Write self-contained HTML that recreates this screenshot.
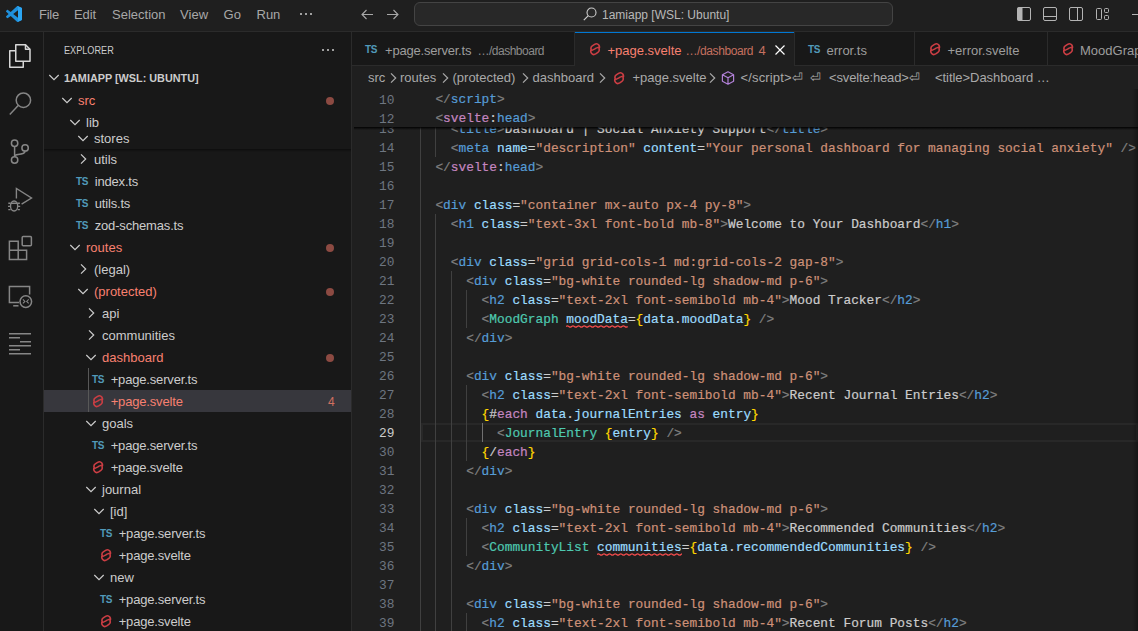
<!DOCTYPE html>
<html><head><meta charset="utf-8"><style>
html,body{margin:0;padding:0;}
body{width:1138px;height:631px;overflow:hidden;position:relative;background:#181818;}
.r{position:absolute;}
.t{position:absolute;white-space:pre;}
.c span{-webkit-text-stroke:0.2px;}
</style></head><body>
<div class="r" style="left:0px;top:0px;width:1138px;height:31px;background:#1f1f1f;"></div>
<div class="r" style="left:0px;top:31px;width:1138px;height:1px;background:#2b2b2b;"></div>
<div class="r" style="left:0px;top:32px;width:43px;height:599px;background:#181818;"></div>
<div class="r" style="left:43px;top:32px;width:1px;height:599px;background:#2b2b2b;"></div>
<div class="r" style="left:44px;top:32px;width:307px;height:599px;background:#181818;"></div>
<div class="r" style="left:351px;top:32px;width:1px;height:599px;background:#2b2b2b;"></div>
<div class="r" style="left:352px;top:32px;width:786px;height:599px;background:#1f1f1f;"></div>
<svg class="r" style="left:6px;top:6px" width="16" height="16" viewBox="0 0 100 100"><path d="M96.46 10.8 L75.86 0.87 C73.48 -0.28 70.64 0.2 68.77 2.07 L29.34 38.04 L12.16 25.01 C10.56 23.79 8.32 23.89 6.84 25.24 L1.33 30.25 C-0.49 31.9 -0.49 34.76 1.33 36.41 L16.22 50 L1.33 63.59 C-0.49 65.24 -0.49 68.1 1.33 69.75 L6.84 74.76 C8.32 76.11 10.56 76.21 12.16 74.99 L29.34 61.96 L68.77 97.93 C70.64 99.8 73.48 100.28 75.86 99.13 L96.46 89.2 C98.62 88.16 100 85.97 100 83.57 V16.43 C100 14.03 98.62 11.84 96.46 10.8 Z M75.02 72.7 L45.11 50 L75.02 27.3 Z" fill="#1f90dc" fill-rule="evenodd"/><path d="M68.77 2.07 C70.64 0.2 73.48 -0.28 75.86 0.87 L96.46 10.8 C98.62 11.84 100 14.03 100 16.43 V83.57 C100 85.97 98.62 88.16 96.46 89.2 L75.86 99.13 C73.48 100.28 70.64 99.8 68.77 97.93 C71 99 75 98 75.02 95 V5 C75 2 71 1 68.77 2.07 Z" fill="#2ba6f3"/></svg>
<div class="t" style="left:39px;top:4.99px;font-size:13px;line-height:20px;color:#a8a8a8;font-weight:400;font-family:'Liberation Sans', sans-serif;letter-spacing:-0.25px;">File</div>
<div class="t" style="left:74px;top:4.99px;font-size:13px;line-height:20px;color:#a8a8a8;font-weight:400;font-family:'Liberation Sans', sans-serif;letter-spacing:-0.1px;">Edit</div>
<div class="t" style="left:112px;top:4.99px;font-size:13px;line-height:20px;color:#a8a8a8;font-weight:400;font-family:'Liberation Sans', sans-serif;letter-spacing:0px;">Selection</div>
<div class="t" style="left:180px;top:4.99px;font-size:13px;line-height:20px;color:#a8a8a8;font-weight:400;font-family:'Liberation Sans', sans-serif;letter-spacing:0.1px;">View</div>
<div class="t" style="left:223.5px;top:4.99px;font-size:13px;line-height:20px;color:#a8a8a8;font-weight:400;font-family:'Liberation Sans', sans-serif;letter-spacing:0.1px;">Go</div>
<div class="t" style="left:256.5px;top:4.99px;font-size:13px;line-height:20px;color:#a8a8a8;font-weight:400;font-family:'Liberation Sans', sans-serif;letter-spacing:0px;">Run</div>
<div class="r" style="left:300px;top:13px;width:2px;height:2px;background:#cccccc;border-radius:1px;"></div>
<div class="r" style="left:305px;top:13px;width:2px;height:2px;background:#cccccc;border-radius:1px;"></div>
<div class="r" style="left:310px;top:13px;width:2px;height:2px;background:#cccccc;border-radius:1px;"></div>
<svg class="r" style="left:359px;top:6px;" width="16" height="16" viewBox="0 0 16 16"><path d="M14 8.5 H3 M7.5 4 L3 8.5 L7.5 13" stroke="#a8a8a8" stroke-width="1.1" fill="none"/></svg>
<svg class="r" style="left:385px;top:6px;" width="16" height="16" viewBox="0 0 16 16"><path d="M2 8.5 H13 M8.5 4 L13 8.5 L8.5 13" stroke="#a8a8a8" stroke-width="1.1" fill="none"/></svg>
<div class="r" style="left:414px;top:2px;width:479px;height:24px;background:#282828;box-sizing:border-box;border:1px solid #444444;border-radius:6px;"></div>
<svg class="r" style="left:582px;top:6px;" width="16" height="16" viewBox="0 0 16 16"><circle cx="9.5" cy="6.5" r="4.5" stroke="#cccccc" stroke-width="1.1" fill="none"/><path d="M6.3 9.7 L1.8 14.2" stroke="#cccccc" stroke-width="1.2"/></svg>
<div class="t" style="left:602px;top:5.34px;font-size:12px;line-height:20px;color:#b8b8b8;font-weight:400;font-family:'Liberation Sans', sans-serif;">1amiapp [WSL: Ubuntu]</div>
<svg class="r" style="left:1016px;top:6px;" width="16" height="16" viewBox="0 0 16 16"><rect x="1.5" y="1.5" width="13" height="13" rx="1.5" stroke="#b4b4b4" fill="none"/><rect x="1.5" y="1.5" width="5" height="13" fill="#b4b4b4"/></svg>
<svg class="r" style="left:1042px;top:6px;" width="16" height="16" viewBox="0 0 16 16"><rect x="1.5" y="1.5" width="13" height="13" rx="1.5" stroke="#b4b4b4" fill="none"/><path d="M1.5 10.5 H14.5" stroke="#b4b4b4"/></svg>
<svg class="r" style="left:1068px;top:6px;" width="16" height="16" viewBox="0 0 16 16"><rect x="1.5" y="1.5" width="13" height="13" rx="1.5" stroke="#b4b4b4" fill="none"/><path d="M9.5 1.5 V14.5" stroke="#b4b4b4"/></svg>
<svg class="r" style="left:1094px;top:6px;" width="16" height="16" viewBox="0 0 16 16"><rect x="2.5" y="2.5" width="5" height="11" rx="1" stroke="#b4b4b4" fill="none"/><rect x="10.5" y="2.5" width="4" height="4" rx="1" stroke="#b4b4b4" fill="none"/><rect x="10.5" y="9.5" width="4" height="4" rx="1" stroke="#b4b4b4" fill="none"/></svg>
<div class="r" style="left:1132px;top:14px;width:6px;height:1px;background:#b4b4b4;"></div>
<svg class="r" style="left:0px;top:32px;" width="43" height="48" viewBox="0 0 43 48"><g fill="none" stroke="#d7d7d7" stroke-width="1.5" stroke-linejoin="round">
<path d="M15.75 12.75 H25.5 L30 17.25 V29.25 H15.75 Z"/><path d="M25.5 12.75 V17.25 H30"/>
<path d="M15.75 18.75 H9.75 V35.25 H23.25 V29.25"/></g></svg>
<svg class="r" style="left:0px;top:80px;" width="43" height="48" viewBox="0 0 43 48"><g fill="none" stroke="#868686" stroke-width="1.5"><circle cx="23.4" cy="20.2" r="7.2"/><path d="M18.2 25.6 L9.8 34.5"/></g></svg>
<svg class="r" style="left:0px;top:128px;" width="43" height="48" viewBox="0 0 43 48"><g fill="none" stroke="#868686" stroke-width="1.5"><circle cx="14.6" cy="15.3" r="3.2"/><circle cx="25.1" cy="19.9" r="3.2"/><circle cx="14.6" cy="32" r="3.2"/><path d="M14.6 18.5 V28.8 M25.1 23.1 C25.1 26 22 26.3 18 26.5 C15.5 26.7 14.6 27.5 14.6 28.8"/></g></svg>
<svg class="r" style="left:0px;top:176px;" width="43" height="48" viewBox="0 0 43 48"><g fill="none" stroke="#868686" stroke-width="1.4"><path d="M16.4 22.5 V12.5 L31.5 22 L21.6 28.2"/><ellipse cx="14.1" cy="30" rx="3.6" ry="5"/><path d="M10.8 27.3 H17.4 M8.3 27.2 H10.3 M8 30.4 H10.3 M8.3 33.6 H10.6 M17.9 27.2 H19.9 M17.9 30.4 H20.2 M17.6 33.6 H19.9"/></g></svg>
<svg class="r" style="left:0px;top:224px;" width="43" height="48" viewBox="0 0 43 48"><g fill="none" stroke="#868686" stroke-width="1.5"><path d="M9.4 17.2 H18.2 V35.4 H9.4 Z M9.4 26.2 H26.6 V35.4 H18.2"/><rect x="22.2" y="12.6" width="9.2" height="9.2" rx="1"/></g></svg>
<svg class="r" style="left:0px;top:272px;" width="43" height="48" viewBox="0 0 43 48"><g fill="none" stroke="#868686" stroke-width="1.5"><path d="M19 30.6 H9.4 V14.6 H29.6 V22.5"/><path d="M13.2 33.8 H18.5"/><circle cx="25.8" cy="29.6" r="5.8"/><path d="M22.9 27.4 L24.9 29.4 L22.9 31.4 M28.7 27.4 L26.7 29.4 L28.7 31.4" stroke-width="1.1"/></g></svg>
<svg class="r" style="left:0px;top:320px;" width="43" height="48" viewBox="0 0 43 48"><g stroke="#868686" stroke-width="1.5"><path d="M9 13.75 H31 M9 17.75 H20 M20 21.75 H31 M9 25.75 H31 M9 29.75 H20 M9 33.75 H31"/></g></svg>
<div class="t" style="left:64px;top:39.69px;font-size:11px;line-height:20px;color:#cccccc;font-weight:400;font-family:'Liberation Sans', sans-serif;transform-origin:0 0;transform:scaleX(0.83);">EXPLORER</div>
<div class="r" style="left:322px;top:49px;width:2px;height:2px;background:#cccccc;border-radius:1px;"></div>
<div class="r" style="left:327px;top:49px;width:2px;height:2px;background:#cccccc;border-radius:1px;"></div>
<div class="r" style="left:332px;top:49px;width:2px;height:2px;background:#cccccc;border-radius:1px;"></div>
<svg class="r" style="left:75px;top:151px;" width="16" height="16" viewBox="0 0 16 16"><path d="M6 3.3 L10.7 8 L6 12.7" stroke="#cccccc" stroke-width="1.2" fill="none"/></svg>
<div class="t" style="left:94px;top:149.99px;font-size:13px;line-height:20px;color:#cccccc;font-weight:400;font-family:'Liberation Sans', sans-serif;">utils</div>
<div class="t" style="left:76px;top:177px;font-family:'Liberation Sans', sans-serif;font-weight:700;font-size:10px;line-height:10px;color:#519aba;letter-spacing:-0.3px;">TS</div>
<div class="t" style="left:94.7px;top:171.99px;font-size:13px;line-height:20px;color:#cccccc;font-weight:400;font-family:'Liberation Sans', sans-serif;letter-spacing:-0.17px;">index.ts</div>
<div class="t" style="left:76px;top:199px;font-family:'Liberation Sans', sans-serif;font-weight:700;font-size:10px;line-height:10px;color:#519aba;letter-spacing:-0.3px;">TS</div>
<div class="t" style="left:94.7px;top:193.99px;font-size:13px;line-height:20px;color:#cccccc;font-weight:400;font-family:'Liberation Sans', sans-serif;letter-spacing:-0.17px;">utils.ts</div>
<div class="t" style="left:76px;top:221px;font-family:'Liberation Sans', sans-serif;font-weight:700;font-size:10px;line-height:10px;color:#519aba;letter-spacing:-0.3px;">TS</div>
<div class="t" style="left:94.7px;top:215.99px;font-size:13px;line-height:20px;color:#cccccc;font-weight:400;font-family:'Liberation Sans', sans-serif;letter-spacing:-0.17px;">zod-schemas.ts</div>
<svg class="r" style="left:67px;top:239px;" width="16" height="16" viewBox="0 0 16 16"><path d="M3.3 6 L8 10.7 L12.7 6" stroke="#cccccc" stroke-width="1.2" fill="none"/></svg>
<div class="t" style="left:86px;top:237.99px;font-size:13px;line-height:20px;color:#f88070;font-weight:400;font-family:'Liberation Sans', sans-serif;">routes</div>
<div class="r" style="left:325.5px;top:243.5px;width:8px;height:8px;border-radius:50%;background:#8c4a42"></div>
<svg class="r" style="left:75px;top:261px;" width="16" height="16" viewBox="0 0 16 16"><path d="M6 3.3 L10.7 8 L6 12.7" stroke="#cccccc" stroke-width="1.2" fill="none"/></svg>
<div class="t" style="left:94px;top:259.99px;font-size:13px;line-height:20px;color:#cccccc;font-weight:400;font-family:'Liberation Sans', sans-serif;">(legal)</div>
<svg class="r" style="left:75px;top:283px;" width="16" height="16" viewBox="0 0 16 16"><path d="M3.3 6 L8 10.7 L12.7 6" stroke="#cccccc" stroke-width="1.2" fill="none"/></svg>
<div class="t" style="left:94px;top:281.99px;font-size:13px;line-height:20px;color:#f88070;font-weight:400;font-family:'Liberation Sans', sans-serif;">(protected)</div>
<div class="r" style="left:325.5px;top:287.5px;width:8px;height:8px;border-radius:50%;background:#8c4a42"></div>
<svg class="r" style="left:83px;top:305px;" width="16" height="16" viewBox="0 0 16 16"><path d="M6 3.3 L10.7 8 L6 12.7" stroke="#cccccc" stroke-width="1.2" fill="none"/></svg>
<div class="t" style="left:102px;top:303.99px;font-size:13px;line-height:20px;color:#cccccc;font-weight:400;font-family:'Liberation Sans', sans-serif;">api</div>
<svg class="r" style="left:83px;top:327px;" width="16" height="16" viewBox="0 0 16 16"><path d="M6 3.3 L10.7 8 L6 12.7" stroke="#cccccc" stroke-width="1.2" fill="none"/></svg>
<div class="t" style="left:102px;top:325.99px;font-size:13px;line-height:20px;color:#cccccc;font-weight:400;font-family:'Liberation Sans', sans-serif;">communities</div>
<svg class="r" style="left:83px;top:349px;" width="16" height="16" viewBox="0 0 16 16"><path d="M3.3 6 L8 10.7 L12.7 6" stroke="#cccccc" stroke-width="1.2" fill="none"/></svg>
<div class="t" style="left:102px;top:347.99px;font-size:13px;line-height:20px;color:#f88070;font-weight:400;font-family:'Liberation Sans', sans-serif;">dashboard</div>
<div class="r" style="left:325.5px;top:353.5px;width:8px;height:8px;border-radius:50%;background:#8c4a42"></div>
<div class="t" style="left:92px;top:375px;font-family:'Liberation Sans', sans-serif;font-weight:700;font-size:10px;line-height:10px;color:#519aba;letter-spacing:-0.3px;">TS</div>
<div class="t" style="left:110.7px;top:369.99px;font-size:13px;line-height:20px;color:#cccccc;font-weight:400;font-family:'Liberation Sans', sans-serif;letter-spacing:-0.17px;">+page.server.ts</div>
<div class="r" style="left:44px;top:390px;width:307px;height:22px;background:#37373d;"></div>
<svg class="r" style="left:92px;top:394px" width="12" height="14" viewBox="0 0 12 14"><g transform="translate(0.9 0.9)" fill="none" stroke="#cc3e44" stroke-linejoin="round" stroke-linecap="round"><path stroke-width="1.6" d="M8.9 2.2 C7.9 0.9 6.1 0.6 4.7 1.5 L2.4 3 C1.2 3.8 0.8 5.4 1.3 6.7 C0.7 7.8 0.8 9.3 1.6 10.3 C2.6 11.6 4.4 11.9 5.8 11 L8 9.5 C9.2 8.7 9.6 7.1 9.1 5.8 C9.7 4.7 9.7 3.2 8.9 2.2 Z"/><path stroke-width="1.35" d="M1.8 7.6 C2.8 7.2 3.6 6.9 4.6 6.3 C5.2 5.9 5.5 5.6 6.2 5.3 C7 5 7.8 4.7 8.8 4.2"/></g></svg>
<div class="t" style="left:110.7px;top:391.99px;font-size:13px;line-height:20px;color:#f88070;font-weight:400;font-family:'Liberation Sans', sans-serif;letter-spacing:-0.17px;">+page.svelte</div>
<div class="t" style="left:328px;top:392.34px;font-size:12px;line-height:20px;color:#d07060;font-weight:400;font-family:'Liberation Sans', sans-serif;">4</div>
<svg class="r" style="left:83px;top:415px;" width="16" height="16" viewBox="0 0 16 16"><path d="M3.3 6 L8 10.7 L12.7 6" stroke="#cccccc" stroke-width="1.2" fill="none"/></svg>
<div class="t" style="left:102px;top:413.99px;font-size:13px;line-height:20px;color:#cccccc;font-weight:400;font-family:'Liberation Sans', sans-serif;">goals</div>
<div class="t" style="left:92px;top:441px;font-family:'Liberation Sans', sans-serif;font-weight:700;font-size:10px;line-height:10px;color:#519aba;letter-spacing:-0.3px;">TS</div>
<div class="t" style="left:110.7px;top:435.99px;font-size:13px;line-height:20px;color:#cccccc;font-weight:400;font-family:'Liberation Sans', sans-serif;letter-spacing:-0.17px;">+page.server.ts</div>
<svg class="r" style="left:92px;top:460px" width="12" height="14" viewBox="0 0 12 14"><g transform="translate(0.9 0.9)" fill="none" stroke="#cc3e44" stroke-linejoin="round" stroke-linecap="round"><path stroke-width="1.6" d="M8.9 2.2 C7.9 0.9 6.1 0.6 4.7 1.5 L2.4 3 C1.2 3.8 0.8 5.4 1.3 6.7 C0.7 7.8 0.8 9.3 1.6 10.3 C2.6 11.6 4.4 11.9 5.8 11 L8 9.5 C9.2 8.7 9.6 7.1 9.1 5.8 C9.7 4.7 9.7 3.2 8.9 2.2 Z"/><path stroke-width="1.35" d="M1.8 7.6 C2.8 7.2 3.6 6.9 4.6 6.3 C5.2 5.9 5.5 5.6 6.2 5.3 C7 5 7.8 4.7 8.8 4.2"/></g></svg>
<div class="t" style="left:110.7px;top:457.99px;font-size:13px;line-height:20px;color:#cccccc;font-weight:400;font-family:'Liberation Sans', sans-serif;letter-spacing:-0.17px;">+page.svelte</div>
<svg class="r" style="left:83px;top:481px;" width="16" height="16" viewBox="0 0 16 16"><path d="M3.3 6 L8 10.7 L12.7 6" stroke="#cccccc" stroke-width="1.2" fill="none"/></svg>
<div class="t" style="left:102px;top:479.99px;font-size:13px;line-height:20px;color:#cccccc;font-weight:400;font-family:'Liberation Sans', sans-serif;">journal</div>
<svg class="r" style="left:91px;top:503px;" width="16" height="16" viewBox="0 0 16 16"><path d="M3.3 6 L8 10.7 L12.7 6" stroke="#cccccc" stroke-width="1.2" fill="none"/></svg>
<div class="t" style="left:110px;top:501.99px;font-size:13px;line-height:20px;color:#cccccc;font-weight:400;font-family:'Liberation Sans', sans-serif;">[id]</div>
<div class="t" style="left:100px;top:529px;font-family:'Liberation Sans', sans-serif;font-weight:700;font-size:10px;line-height:10px;color:#519aba;letter-spacing:-0.3px;">TS</div>
<div class="t" style="left:118.7px;top:523.99px;font-size:13px;line-height:20px;color:#cccccc;font-weight:400;font-family:'Liberation Sans', sans-serif;letter-spacing:-0.17px;">+page.server.ts</div>
<svg class="r" style="left:100px;top:548px" width="12" height="14" viewBox="0 0 12 14"><g transform="translate(0.9 0.9)" fill="none" stroke="#cc3e44" stroke-linejoin="round" stroke-linecap="round"><path stroke-width="1.6" d="M8.9 2.2 C7.9 0.9 6.1 0.6 4.7 1.5 L2.4 3 C1.2 3.8 0.8 5.4 1.3 6.7 C0.7 7.8 0.8 9.3 1.6 10.3 C2.6 11.6 4.4 11.9 5.8 11 L8 9.5 C9.2 8.7 9.6 7.1 9.1 5.8 C9.7 4.7 9.7 3.2 8.9 2.2 Z"/><path stroke-width="1.35" d="M1.8 7.6 C2.8 7.2 3.6 6.9 4.6 6.3 C5.2 5.9 5.5 5.6 6.2 5.3 C7 5 7.8 4.7 8.8 4.2"/></g></svg>
<div class="t" style="left:118.7px;top:545.99px;font-size:13px;line-height:20px;color:#cccccc;font-weight:400;font-family:'Liberation Sans', sans-serif;letter-spacing:-0.17px;">+page.svelte</div>
<svg class="r" style="left:91px;top:569px;" width="16" height="16" viewBox="0 0 16 16"><path d="M3.3 6 L8 10.7 L12.7 6" stroke="#cccccc" stroke-width="1.2" fill="none"/></svg>
<div class="t" style="left:110px;top:567.99px;font-size:13px;line-height:20px;color:#cccccc;font-weight:400;font-family:'Liberation Sans', sans-serif;">new</div>
<div class="t" style="left:100px;top:595px;font-family:'Liberation Sans', sans-serif;font-weight:700;font-size:10px;line-height:10px;color:#519aba;letter-spacing:-0.3px;">TS</div>
<div class="t" style="left:118.7px;top:589.99px;font-size:13px;line-height:20px;color:#cccccc;font-weight:400;font-family:'Liberation Sans', sans-serif;letter-spacing:-0.17px;">+page.server.ts</div>
<svg class="r" style="left:100px;top:614px" width="12" height="14" viewBox="0 0 12 14"><g transform="translate(0.9 0.9)" fill="none" stroke="#cc3e44" stroke-linejoin="round" stroke-linecap="round"><path stroke-width="1.6" d="M8.9 2.2 C7.9 0.9 6.1 0.6 4.7 1.5 L2.4 3 C1.2 3.8 0.8 5.4 1.3 6.7 C0.7 7.8 0.8 9.3 1.6 10.3 C2.6 11.6 4.4 11.9 5.8 11 L8 9.5 C9.2 8.7 9.6 7.1 9.1 5.8 C9.7 4.7 9.7 3.2 8.9 2.2 Z"/><path stroke-width="1.35" d="M1.8 7.6 C2.8 7.2 3.6 6.9 4.6 6.3 C5.2 5.9 5.5 5.6 6.2 5.3 C7 5 7.8 4.7 8.8 4.2"/></g></svg>
<div class="t" style="left:118.7px;top:611.99px;font-size:13px;line-height:20px;color:#cccccc;font-weight:400;font-family:'Liberation Sans', sans-serif;letter-spacing:-0.17px;">+page.svelte</div>
<div class="r" style="left:88px;top:368px;width:1px;height:44px;background:#585858;"></div>
<div class="r" style="left:44px;top:89px;width:307px;height:60px;background:#181818;"></div>
<div class="r" style="left:44px;top:88px;width:307px;height:61px;overflow:hidden;">
</div>
<svg class="r" style="left:75px;top:130px;" width="16" height="16" viewBox="0 0 16 16"><path d="M3.3 6 L8 10.7 L12.7 6" stroke="#cccccc" stroke-width="1.2" fill="none"/></svg>
<div class="t" style="left:94px;top:128.99px;font-size:13px;line-height:20px;color:#cccccc;font-weight:400;font-family:'Liberation Sans', sans-serif;">stores</div>
<div class="r" style="left:44px;top:111px;width:307px;height:16px;background:#181818;"></div>
<svg class="r" style="left:67px;top:114px;" width="16" height="16" viewBox="0 0 16 16"><path d="M3.3 6 L8 10.7 L12.7 6" stroke="#cccccc" stroke-width="1.2" fill="none"/></svg>
<div class="t" style="left:86px;top:112.99px;font-size:13px;line-height:20px;color:#cccccc;font-weight:400;font-family:'Liberation Sans', sans-serif;">lib</div>
<svg class="r" style="left:59px;top:92px;" width="16" height="16" viewBox="0 0 16 16"><path d="M3.3 6 L8 10.7 L12.7 6" stroke="#cccccc" stroke-width="1.2" fill="none"/></svg>
<div class="t" style="left:78px;top:90.99px;font-size:13px;line-height:20px;color:#f88070;font-weight:400;font-family:'Liberation Sans', sans-serif;">src</div>
<div class="r" style="left:325.5px;top:96.5px;width:8px;height:8px;border-radius:50%;background:#8c4a42"></div>
<div class="r" style="left:44px;top:149px;width:307px;height:3px;background:linear-gradient(rgba(0,0,0,0.45),rgba(0,0,0,0));"></div>
<svg class="r" style="left:46px;top:69px;" width="16" height="16" viewBox="0 0 16 16"><path d="M3.3 6 L8 10.7 L12.7 6" stroke="#cccccc" stroke-width="1.2" fill="none"/></svg>
<div class="t" style="left:64px;top:67.69px;font-size:11px;line-height:20px;color:#cccccc;font-weight:700;font-family:'Liberation Sans', sans-serif;transform-origin:0 0;transform:scaleX(0.985);">1AMIAPP [WSL: UBUNTU]</div>
<div class="r" style="left:352px;top:65px;width:786px;height:1px;background:#2b2b2b;"></div>
<div class="r" style="left:352px;top:32px;width:222px;height:33px;background:#181818;"></div>
<div class="r" style="left:574px;top:32px;width:1px;height:33px;background:#2b2b2b;"></div>
<div class="r" style="left:575px;top:32px;width:219px;height:34px;background:#1f1f1f;"></div>
<div class="r" style="left:575px;top:32px;width:219px;height:1px;background:#0078d4;"></div>
<div class="r" style="left:794px;top:32px;width:1px;height:33px;background:#2b2b2b;"></div>
<div class="r" style="left:795px;top:32px;width:119px;height:33px;background:#181818;"></div>
<div class="r" style="left:914px;top:32px;width:1px;height:33px;background:#2b2b2b;"></div>
<div class="r" style="left:915px;top:32px;width:132px;height:33px;background:#181818;"></div>
<div class="r" style="left:1047px;top:32px;width:1px;height:33px;background:#2b2b2b;"></div>
<div class="r" style="left:1048px;top:32px;width:152px;height:33px;background:#181818;"></div>
<div class="r" style="left:1200px;top:32px;width:1px;height:33px;background:#2b2b2b;"></div>
<div class="t" style="left:365px;top:45px;font-family:'Liberation Sans', sans-serif;font-weight:700;font-size:10px;line-height:10px;color:#519aba;letter-spacing:-0.3px;">TS</div>
<div class="t" style="left:385px;top:40.99px;font-size:13px;line-height:20px;color:#9d9d9d;font-weight:400;font-family:'Liberation Sans', sans-serif;letter-spacing:-0.2px;">+page.server.ts</div>
<div class="t" style="left:477.5px;top:41.34px;font-size:12px;line-height:20px;color:#8b8b8b;font-weight:400;font-family:'Liberation Sans', sans-serif;letter-spacing:-0.5px;">…/dashboard</div>
<svg class="r" style="left:589px;top:42px" width="12" height="14" viewBox="0 0 12 14"><g transform="translate(0.9 0.9)" fill="none" stroke="#cc3e44" stroke-linejoin="round" stroke-linecap="round"><path stroke-width="1.6" d="M8.9 2.2 C7.9 0.9 6.1 0.6 4.7 1.5 L2.4 3 C1.2 3.8 0.8 5.4 1.3 6.7 C0.7 7.8 0.8 9.3 1.6 10.3 C2.6 11.6 4.4 11.9 5.8 11 L8 9.5 C9.2 8.7 9.6 7.1 9.1 5.8 C9.7 4.7 9.7 3.2 8.9 2.2 Z"/><path stroke-width="1.35" d="M1.8 7.6 C2.8 7.2 3.6 6.9 4.6 6.3 C5.2 5.9 5.5 5.6 6.2 5.3 C7 5 7.8 4.7 8.8 4.2"/></g></svg>
<div class="t" style="left:607.5px;top:40.99px;font-size:13px;line-height:20px;color:#f88070;font-weight:400;font-family:'Liberation Sans', sans-serif;">+page.svelte</div>
<div class="t" style="left:685.5px;top:41.34px;font-size:12px;line-height:20px;color:#c5705f;font-weight:400;font-family:'Liberation Sans', sans-serif;letter-spacing:-0.4px;">…/dashboard</div>
<div class="t" style="left:758.5px;top:40.99px;font-size:13px;line-height:20px;color:#c5705f;font-weight:400;font-family:'Liberation Sans', sans-serif;">4</div>
<svg class="r" style="left:772px;top:42px;" width="16" height="16" viewBox="0 0 16 16"><path d="M3.5 3.5 L12.5 12.5 M12.5 3.5 L3.5 12.5" stroke="#ffffff" stroke-width="1.2"/></svg>
<div class="t" style="left:808px;top:45px;font-family:'Liberation Sans', sans-serif;font-weight:700;font-size:10px;line-height:10px;color:#519aba;letter-spacing:-0.3px;">TS</div>
<div class="t" style="left:826.5px;top:40.99px;font-size:13px;line-height:20px;color:#9d9d9d;font-weight:400;font-family:'Liberation Sans', sans-serif;">error.ts</div>
<svg class="r" style="left:929px;top:42px" width="12" height="14" viewBox="0 0 12 14"><g transform="translate(0.9 0.9)" fill="none" stroke="#cc3e44" stroke-linejoin="round" stroke-linecap="round"><path stroke-width="1.6" d="M8.9 2.2 C7.9 0.9 6.1 0.6 4.7 1.5 L2.4 3 C1.2 3.8 0.8 5.4 1.3 6.7 C0.7 7.8 0.8 9.3 1.6 10.3 C2.6 11.6 4.4 11.9 5.8 11 L8 9.5 C9.2 8.7 9.6 7.1 9.1 5.8 C9.7 4.7 9.7 3.2 8.9 2.2 Z"/><path stroke-width="1.35" d="M1.8 7.6 C2.8 7.2 3.6 6.9 4.6 6.3 C5.2 5.9 5.5 5.6 6.2 5.3 C7 5 7.8 4.7 8.8 4.2"/></g></svg>
<div class="t" style="left:947.5px;top:40.99px;font-size:13px;line-height:20px;color:#9d9d9d;font-weight:400;font-family:'Liberation Sans', sans-serif;">+error.svelte</div>
<svg class="r" style="left:1062px;top:42px" width="12" height="14" viewBox="0 0 12 14"><g transform="translate(0.9 0.9)" fill="none" stroke="#cc3e44" stroke-linejoin="round" stroke-linecap="round"><path stroke-width="1.6" d="M8.9 2.2 C7.9 0.9 6.1 0.6 4.7 1.5 L2.4 3 C1.2 3.8 0.8 5.4 1.3 6.7 C0.7 7.8 0.8 9.3 1.6 10.3 C2.6 11.6 4.4 11.9 5.8 11 L8 9.5 C9.2 8.7 9.6 7.1 9.1 5.8 C9.7 4.7 9.7 3.2 8.9 2.2 Z"/><path stroke-width="1.35" d="M1.8 7.6 C2.8 7.2 3.6 6.9 4.6 6.3 C5.2 5.9 5.5 5.6 6.2 5.3 C7 5 7.8 4.7 8.8 4.2"/></g></svg>
<div class="t" style="left:1080px;top:40.99px;font-size:13px;line-height:20px;color:#9d9d9d;font-weight:400;font-family:'Liberation Sans', sans-serif;">MoodGraph.svelte</div>
<div class="t" style="left:368px;top:67.99px;font-size:13px;line-height:20px;color:#a9a9a9;font-weight:400;font-family:'Liberation Sans', sans-serif;">src</div>
<div class="t" style="left:400px;top:67.99px;font-size:13px;line-height:20px;color:#a9a9a9;font-weight:400;font-family:'Liberation Sans', sans-serif;">routes</div>
<div class="t" style="left:452.5px;top:67.99px;font-size:13px;line-height:20px;color:#a9a9a9;font-weight:400;font-family:'Liberation Sans', sans-serif;">(protected)</div>
<div class="t" style="left:532.5px;top:67.99px;font-size:13px;line-height:20px;color:#a9a9a9;font-weight:400;font-family:'Liberation Sans', sans-serif;">dashboard</div>
<svg class="r" style="left:384.5px;top:70px;" width="16" height="16" viewBox="0 0 16 16"><path d="M6 3.3 L10.7 8 L6 12.7" stroke="#a9a9a9" stroke-width="1.2" fill="none"/></svg>
<svg class="r" style="left:436.5px;top:70px;" width="16" height="16" viewBox="0 0 16 16"><path d="M6 3.3 L10.7 8 L6 12.7" stroke="#a9a9a9" stroke-width="1.2" fill="none"/></svg>
<svg class="r" style="left:516.5px;top:70px;" width="16" height="16" viewBox="0 0 16 16"><path d="M6 3.3 L10.7 8 L6 12.7" stroke="#a9a9a9" stroke-width="1.2" fill="none"/></svg>
<svg class="r" style="left:593.5px;top:70px;" width="16" height="16" viewBox="0 0 16 16"><path d="M6 3.3 L10.7 8 L6 12.7" stroke="#a9a9a9" stroke-width="1.2" fill="none"/></svg>
<svg class="r" style="left:703.5px;top:70px;" width="16" height="16" viewBox="0 0 16 16"><path d="M6 3.3 L10.7 8 L6 12.7" stroke="#a9a9a9" stroke-width="1.2" fill="none"/></svg>
<svg class="r" style="left:613px;top:71px" width="12" height="14" viewBox="0 0 12 14"><g transform="translate(0.9 0.9)" fill="none" stroke="#cc3e44" stroke-linejoin="round" stroke-linecap="round"><path stroke-width="1.6" d="M8.9 2.2 C7.9 0.9 6.1 0.6 4.7 1.5 L2.4 3 C1.2 3.8 0.8 5.4 1.3 6.7 C0.7 7.8 0.8 9.3 1.6 10.3 C2.6 11.6 4.4 11.9 5.8 11 L8 9.5 C9.2 8.7 9.6 7.1 9.1 5.8 C9.7 4.7 9.7 3.2 8.9 2.2 Z"/><path stroke-width="1.35" d="M1.8 7.6 C2.8 7.2 3.6 6.9 4.6 6.3 C5.2 5.9 5.5 5.6 6.2 5.3 C7 5 7.8 4.7 8.8 4.2"/></g></svg>
<div class="t" style="left:632.5px;top:67.99px;font-size:13px;line-height:20px;color:#a9a9a9;font-weight:400;font-family:'Liberation Sans', sans-serif;">+page.svelte</div>
<svg class="r" style="left:720px;top:70px;" width="16" height="16" viewBox="0 0 16 16"><path d="M8 1.8 L13.6 4.8 V11.2 L8 14.2 L2.4 11.2 V4.8 Z M2.4 4.8 L8 7.8 L13.6 4.8 M8 7.8 V14.2" stroke="#b180d7" stroke-width="1.2" fill="none" stroke-linejoin="round"/></svg>
<div class="t" style="left:740.5px;top:67.99px;font-size:13px;line-height:20px;color:#a9a9a9;font-weight:400;font-family:'Liberation Sans', sans-serif;letter-spacing:0.15px;">&lt;/script&gt;⏎</div>
<div class="t" style="left:810px;top:67.99px;font-size:13px;line-height:20px;color:#a9a9a9;font-weight:400;font-family:'Liberation Sans', sans-serif;">⏎</div>
<div class="t" style="left:829px;top:67.99px;font-size:13px;line-height:20px;color:#a9a9a9;font-weight:400;font-family:'Liberation Sans', sans-serif;letter-spacing:-0.15px;">&lt;svelte:head&gt;⏎</div>
<div class="t" style="left:935px;top:67.99px;font-size:13px;line-height:20px;color:#a9a9a9;font-weight:400;font-family:'Liberation Sans', sans-serif;letter-spacing:-0.05px;">&lt;title&gt;Dashboard …</div>
<div class="r" style="left:421px;top:423px;width:717px;height:19px;background:transparent;box-sizing:border-box;border:2px solid #282828;"></div>
<div class="r" style="left:420px;top:119px;width:1px;height:19px;background:#404040;"></div>
<div class="r" style="left:435px;top:119px;width:1px;height:19px;background:#404040;"></div>
<div class="r" style="left:420px;top:138px;width:1px;height:19px;background:#404040;"></div>
<div class="r" style="left:435px;top:138px;width:1px;height:19px;background:#404040;"></div>
<div class="r" style="left:420px;top:157px;width:1px;height:19px;background:#404040;"></div>
<div class="r" style="left:420px;top:176px;width:1px;height:19px;background:#404040;"></div>
<div class="r" style="left:420px;top:195px;width:1px;height:19px;background:#404040;"></div>
<div class="r" style="left:420px;top:214px;width:1px;height:19px;background:#404040;"></div>
<div class="r" style="left:435px;top:214px;width:1px;height:19px;background:#404040;"></div>
<div class="r" style="left:420px;top:233px;width:1px;height:19px;background:#404040;"></div>
<div class="r" style="left:435px;top:233px;width:1px;height:19px;background:#404040;"></div>
<div class="r" style="left:420px;top:252px;width:1px;height:19px;background:#404040;"></div>
<div class="r" style="left:435px;top:252px;width:1px;height:19px;background:#404040;"></div>
<div class="r" style="left:420px;top:271px;width:1px;height:19px;background:#404040;"></div>
<div class="r" style="left:435px;top:271px;width:1px;height:19px;background:#404040;"></div>
<div class="r" style="left:451px;top:271px;width:1px;height:19px;background:#404040;"></div>
<div class="r" style="left:420px;top:290px;width:1px;height:19px;background:#404040;"></div>
<div class="r" style="left:435px;top:290px;width:1px;height:19px;background:#404040;"></div>
<div class="r" style="left:451px;top:290px;width:1px;height:19px;background:#404040;"></div>
<div class="r" style="left:466px;top:290px;width:1px;height:19px;background:#404040;"></div>
<div class="r" style="left:420px;top:309px;width:1px;height:19px;background:#404040;"></div>
<div class="r" style="left:435px;top:309px;width:1px;height:19px;background:#404040;"></div>
<div class="r" style="left:451px;top:309px;width:1px;height:19px;background:#404040;"></div>
<div class="r" style="left:466px;top:309px;width:1px;height:19px;background:#404040;"></div>
<div class="r" style="left:420px;top:328px;width:1px;height:19px;background:#404040;"></div>
<div class="r" style="left:435px;top:328px;width:1px;height:19px;background:#404040;"></div>
<div class="r" style="left:451px;top:328px;width:1px;height:19px;background:#404040;"></div>
<div class="r" style="left:420px;top:347px;width:1px;height:19px;background:#404040;"></div>
<div class="r" style="left:435px;top:347px;width:1px;height:19px;background:#404040;"></div>
<div class="r" style="left:451px;top:347px;width:1px;height:19px;background:#404040;"></div>
<div class="r" style="left:420px;top:366px;width:1px;height:19px;background:#404040;"></div>
<div class="r" style="left:435px;top:366px;width:1px;height:19px;background:#404040;"></div>
<div class="r" style="left:451px;top:366px;width:1px;height:19px;background:#404040;"></div>
<div class="r" style="left:420px;top:385px;width:1px;height:19px;background:#404040;"></div>
<div class="r" style="left:435px;top:385px;width:1px;height:19px;background:#404040;"></div>
<div class="r" style="left:451px;top:385px;width:1px;height:19px;background:#404040;"></div>
<div class="r" style="left:466px;top:385px;width:1px;height:19px;background:#404040;"></div>
<div class="r" style="left:420px;top:404px;width:1px;height:19px;background:#404040;"></div>
<div class="r" style="left:435px;top:404px;width:1px;height:19px;background:#404040;"></div>
<div class="r" style="left:451px;top:404px;width:1px;height:19px;background:#404040;"></div>
<div class="r" style="left:466px;top:404px;width:1px;height:19px;background:#404040;"></div>
<div class="r" style="left:420px;top:423px;width:1px;height:19px;background:#404040;"></div>
<div class="r" style="left:435px;top:423px;width:1px;height:19px;background:#404040;"></div>
<div class="r" style="left:451px;top:423px;width:1px;height:19px;background:#404040;"></div>
<div class="r" style="left:466px;top:423px;width:1px;height:19px;background:#404040;"></div>
<div class="r" style="left:482px;top:423px;width:1px;height:19px;background:#707070;"></div>
<div class="r" style="left:420px;top:442px;width:1px;height:19px;background:#404040;"></div>
<div class="r" style="left:435px;top:442px;width:1px;height:19px;background:#404040;"></div>
<div class="r" style="left:451px;top:442px;width:1px;height:19px;background:#404040;"></div>
<div class="r" style="left:466px;top:442px;width:1px;height:19px;background:#404040;"></div>
<div class="r" style="left:420px;top:461px;width:1px;height:19px;background:#404040;"></div>
<div class="r" style="left:435px;top:461px;width:1px;height:19px;background:#404040;"></div>
<div class="r" style="left:451px;top:461px;width:1px;height:19px;background:#404040;"></div>
<div class="r" style="left:420px;top:480px;width:1px;height:19px;background:#404040;"></div>
<div class="r" style="left:435px;top:480px;width:1px;height:19px;background:#404040;"></div>
<div class="r" style="left:451px;top:480px;width:1px;height:19px;background:#404040;"></div>
<div class="r" style="left:420px;top:499px;width:1px;height:19px;background:#404040;"></div>
<div class="r" style="left:435px;top:499px;width:1px;height:19px;background:#404040;"></div>
<div class="r" style="left:451px;top:499px;width:1px;height:19px;background:#404040;"></div>
<div class="r" style="left:420px;top:518px;width:1px;height:19px;background:#404040;"></div>
<div class="r" style="left:435px;top:518px;width:1px;height:19px;background:#404040;"></div>
<div class="r" style="left:451px;top:518px;width:1px;height:19px;background:#404040;"></div>
<div class="r" style="left:466px;top:518px;width:1px;height:19px;background:#404040;"></div>
<div class="r" style="left:420px;top:537px;width:1px;height:19px;background:#404040;"></div>
<div class="r" style="left:435px;top:537px;width:1px;height:19px;background:#404040;"></div>
<div class="r" style="left:451px;top:537px;width:1px;height:19px;background:#404040;"></div>
<div class="r" style="left:466px;top:537px;width:1px;height:19px;background:#404040;"></div>
<div class="r" style="left:420px;top:556px;width:1px;height:19px;background:#404040;"></div>
<div class="r" style="left:435px;top:556px;width:1px;height:19px;background:#404040;"></div>
<div class="r" style="left:451px;top:556px;width:1px;height:19px;background:#404040;"></div>
<div class="r" style="left:420px;top:575px;width:1px;height:19px;background:#404040;"></div>
<div class="r" style="left:435px;top:575px;width:1px;height:19px;background:#404040;"></div>
<div class="r" style="left:451px;top:575px;width:1px;height:19px;background:#404040;"></div>
<div class="r" style="left:420px;top:594px;width:1px;height:19px;background:#404040;"></div>
<div class="r" style="left:435px;top:594px;width:1px;height:19px;background:#404040;"></div>
<div class="r" style="left:451px;top:594px;width:1px;height:19px;background:#404040;"></div>
<div class="r" style="left:420px;top:613px;width:1px;height:19px;background:#404040;"></div>
<div class="r" style="left:435px;top:613px;width:1px;height:19px;background:#404040;"></div>
<div class="r" style="left:451px;top:613px;width:1px;height:19px;background:#404040;"></div>
<div class="r" style="left:466px;top:613px;width:1px;height:19px;background:#404040;"></div>
<div class="t" style="left:379.10px;top:120.08px;font-family:'Liberation Mono', monospace;font-size:12.8333px;line-height:19px;color:#6e7681">13</div>
<div class="t" style="left:379.10px;top:139.08px;font-family:'Liberation Mono', monospace;font-size:12.8333px;line-height:19px;color:#6e7681">14</div>
<div class="t" style="left:379.10px;top:158.08px;font-family:'Liberation Mono', monospace;font-size:12.8333px;line-height:19px;color:#6e7681">15</div>
<div class="t" style="left:379.10px;top:177.08px;font-family:'Liberation Mono', monospace;font-size:12.8333px;line-height:19px;color:#6e7681">16</div>
<div class="t" style="left:379.10px;top:196.08px;font-family:'Liberation Mono', monospace;font-size:12.8333px;line-height:19px;color:#6e7681">17</div>
<div class="t" style="left:379.10px;top:215.08px;font-family:'Liberation Mono', monospace;font-size:12.8333px;line-height:19px;color:#6e7681">18</div>
<div class="t" style="left:379.10px;top:234.08px;font-family:'Liberation Mono', monospace;font-size:12.8333px;line-height:19px;color:#6e7681">19</div>
<div class="t" style="left:379.10px;top:253.08px;font-family:'Liberation Mono', monospace;font-size:12.8333px;line-height:19px;color:#6e7681">20</div>
<div class="t" style="left:379.10px;top:272.08px;font-family:'Liberation Mono', monospace;font-size:12.8333px;line-height:19px;color:#6e7681">21</div>
<div class="t" style="left:379.10px;top:291.08px;font-family:'Liberation Mono', monospace;font-size:12.8333px;line-height:19px;color:#6e7681">22</div>
<div class="t" style="left:379.10px;top:310.08px;font-family:'Liberation Mono', monospace;font-size:12.8333px;line-height:19px;color:#6e7681">23</div>
<div class="t" style="left:379.10px;top:329.08px;font-family:'Liberation Mono', monospace;font-size:12.8333px;line-height:19px;color:#6e7681">24</div>
<div class="t" style="left:379.10px;top:348.08px;font-family:'Liberation Mono', monospace;font-size:12.8333px;line-height:19px;color:#6e7681">25</div>
<div class="t" style="left:379.10px;top:367.08px;font-family:'Liberation Mono', monospace;font-size:12.8333px;line-height:19px;color:#6e7681">26</div>
<div class="t" style="left:379.10px;top:386.08px;font-family:'Liberation Mono', monospace;font-size:12.8333px;line-height:19px;color:#6e7681">27</div>
<div class="t" style="left:379.10px;top:405.08px;font-family:'Liberation Mono', monospace;font-size:12.8333px;line-height:19px;color:#6e7681">28</div>
<div class="t" style="left:379.10px;top:424.08px;font-family:'Liberation Mono', monospace;font-size:12.8333px;line-height:19px;color:#cccccc">29</div>
<div class="t" style="left:379.10px;top:443.08px;font-family:'Liberation Mono', monospace;font-size:12.8333px;line-height:19px;color:#6e7681">30</div>
<div class="t" style="left:379.10px;top:462.08px;font-family:'Liberation Mono', monospace;font-size:12.8333px;line-height:19px;color:#6e7681">31</div>
<div class="t" style="left:379.10px;top:481.08px;font-family:'Liberation Mono', monospace;font-size:12.8333px;line-height:19px;color:#6e7681">32</div>
<div class="t" style="left:379.10px;top:500.08px;font-family:'Liberation Mono', monospace;font-size:12.8333px;line-height:19px;color:#6e7681">33</div>
<div class="t" style="left:379.10px;top:519.08px;font-family:'Liberation Mono', monospace;font-size:12.8333px;line-height:19px;color:#6e7681">34</div>
<div class="t" style="left:379.10px;top:538.08px;font-family:'Liberation Mono', monospace;font-size:12.8333px;line-height:19px;color:#6e7681">35</div>
<div class="t" style="left:379.10px;top:557.08px;font-family:'Liberation Mono', monospace;font-size:12.8333px;line-height:19px;color:#6e7681">36</div>
<div class="t" style="left:379.10px;top:576.08px;font-family:'Liberation Mono', monospace;font-size:12.8333px;line-height:19px;color:#6e7681">37</div>
<div class="t" style="left:379.10px;top:595.08px;font-family:'Liberation Mono', monospace;font-size:12.8333px;line-height:19px;color:#6e7681">38</div>
<div class="t" style="left:379.10px;top:614.08px;font-family:'Liberation Mono', monospace;font-size:12.8333px;line-height:19px;color:#6e7681">39</div>
<div class="t c" style="left:450.80px;top:120.08px;font-family:'Liberation Mono', monospace;font-size:12.8333px;line-height:19px;"><span style="color:#808080">&lt;</span><span style="color:#569cd6">title</span><span style="color:#808080">&gt;</span><span style="color:#cccccc">Dashboard | Social Anxiety Support</span><span style="color:#808080">&lt;/</span><span style="color:#569cd6">title</span><span style="color:#808080">&gt;</span></div>
<div class="t c" style="left:450.80px;top:139.08px;font-family:'Liberation Mono', monospace;font-size:12.8333px;line-height:19px;"><span style="color:#808080">&lt;</span><span style="color:#569cd6">meta</span><span style="color:#cccccc"> </span><span style="color:#9cdcfe">name</span><span style="color:#cccccc">=</span><span style="color:#ce9178">&quot;description&quot;</span><span style="color:#cccccc"> </span><span style="color:#9cdcfe">content</span><span style="color:#cccccc">=</span><span style="color:#ce9178">&quot;Your personal dashboard for managing social anxiety&quot;</span><span style="color:#cccccc"> </span><span style="color:#808080">/&gt;</span></div>
<div class="t c" style="left:435.40px;top:158.08px;font-family:'Liberation Mono', monospace;font-size:12.8333px;line-height:19px;"><span style="color:#808080">&lt;/</span><span style="color:#c586c0">svelte</span><span style="color:#cccccc">:</span><span style="color:#569cd6">head</span><span style="color:#808080">&gt;</span></div>
<div class="t c" style="left:435.40px;top:196.08px;font-family:'Liberation Mono', monospace;font-size:12.8333px;line-height:19px;"><span style="color:#808080">&lt;</span><span style="color:#569cd6">div</span><span style="color:#cccccc"> </span><span style="color:#9cdcfe">class</span><span style="color:#cccccc">=</span><span style="color:#ce9178">&quot;container mx-auto px-4 py-8&quot;</span><span style="color:#808080">&gt;</span></div>
<div class="t c" style="left:450.80px;top:215.08px;font-family:'Liberation Mono', monospace;font-size:12.8333px;line-height:19px;"><span style="color:#808080">&lt;</span><span style="color:#569cd6">h1</span><span style="color:#cccccc"> </span><span style="color:#9cdcfe">class</span><span style="color:#cccccc">=</span><span style="color:#ce9178">&quot;text-3xl font-bold mb-8&quot;</span><span style="color:#808080">&gt;</span><span style="color:#cccccc">Welcome to Your Dashboard</span><span style="color:#808080">&lt;/</span><span style="color:#569cd6">h1</span><span style="color:#808080">&gt;</span></div>
<div class="t c" style="left:450.80px;top:253.08px;font-family:'Liberation Mono', monospace;font-size:12.8333px;line-height:19px;"><span style="color:#808080">&lt;</span><span style="color:#569cd6">div</span><span style="color:#cccccc"> </span><span style="color:#9cdcfe">class</span><span style="color:#cccccc">=</span><span style="color:#ce9178">&quot;grid grid-cols-1 md:grid-cols-2 gap-8&quot;</span><span style="color:#808080">&gt;</span></div>
<div class="t c" style="left:466.20px;top:272.08px;font-family:'Liberation Mono', monospace;font-size:12.8333px;line-height:19px;"><span style="color:#808080">&lt;</span><span style="color:#569cd6">div</span><span style="color:#cccccc"> </span><span style="color:#9cdcfe">class</span><span style="color:#cccccc">=</span><span style="color:#ce9178">&quot;bg-white rounded-lg shadow-md p-6&quot;</span><span style="color:#808080">&gt;</span></div>
<div class="t c" style="left:481.60px;top:291.08px;font-family:'Liberation Mono', monospace;font-size:12.8333px;line-height:19px;"><span style="color:#808080">&lt;</span><span style="color:#569cd6">h2</span><span style="color:#cccccc"> </span><span style="color:#9cdcfe">class</span><span style="color:#cccccc">=</span><span style="color:#ce9178">&quot;text-2xl font-semibold mb-4&quot;</span><span style="color:#808080">&gt;</span><span style="color:#cccccc">Mood Tracker</span><span style="color:#808080">&lt;/</span><span style="color:#569cd6">h2</span><span style="color:#808080">&gt;</span></div>
<div class="t c" style="left:481.60px;top:310.08px;font-family:'Liberation Mono', monospace;font-size:12.8333px;line-height:19px;"><span style="color:#808080">&lt;</span><span style="color:#4ec9b0">MoodGraph</span><span style="color:#cccccc"> </span><span style="color:#9cdcfe">moodData</span><span style="color:#cccccc">=</span><span style="color:#ffd700">{</span><span style="color:#9cdcfe">data</span><span style="color:#cccccc">.</span><span style="color:#9cdcfe">moodData</span><span style="color:#ffd700">}</span><span style="color:#cccccc"> </span><span style="color:#808080">/&gt;</span></div>
<div class="t c" style="left:466.20px;top:329.08px;font-family:'Liberation Mono', monospace;font-size:12.8333px;line-height:19px;"><span style="color:#808080">&lt;/</span><span style="color:#569cd6">div</span><span style="color:#808080">&gt;</span></div>
<div class="t c" style="left:466.20px;top:367.08px;font-family:'Liberation Mono', monospace;font-size:12.8333px;line-height:19px;"><span style="color:#808080">&lt;</span><span style="color:#569cd6">div</span><span style="color:#cccccc"> </span><span style="color:#9cdcfe">class</span><span style="color:#cccccc">=</span><span style="color:#ce9178">&quot;bg-white rounded-lg shadow-md p-6&quot;</span><span style="color:#808080">&gt;</span></div>
<div class="t c" style="left:481.60px;top:386.08px;font-family:'Liberation Mono', monospace;font-size:12.8333px;line-height:19px;"><span style="color:#808080">&lt;</span><span style="color:#569cd6">h2</span><span style="color:#cccccc"> </span><span style="color:#9cdcfe">class</span><span style="color:#cccccc">=</span><span style="color:#ce9178">&quot;text-2xl font-semibold mb-4&quot;</span><span style="color:#808080">&gt;</span><span style="color:#cccccc">Recent Journal Entries</span><span style="color:#808080">&lt;/</span><span style="color:#569cd6">h2</span><span style="color:#808080">&gt;</span></div>
<div class="t c" style="left:481.60px;top:405.08px;font-family:'Liberation Mono', monospace;font-size:12.8333px;line-height:19px;"><span style="color:#ffd700">{</span><span style="color:#cccccc">#</span><span style="color:#c586c0">each</span><span style="color:#cccccc"> </span><span style="color:#9cdcfe">data</span><span style="color:#cccccc">.</span><span style="color:#9cdcfe">journalEntries</span><span style="color:#cccccc"> </span><span style="color:#c586c0">as</span><span style="color:#cccccc"> </span><span style="color:#9cdcfe">entry</span><span style="color:#ffd700">}</span></div>
<div class="t c" style="left:497.00px;top:424.08px;font-family:'Liberation Mono', monospace;font-size:12.8333px;line-height:19px;"><span style="color:#808080">&lt;</span><span style="color:#4ec9b0">JournalEntry</span><span style="color:#cccccc"> </span><span style="color:#ffd700">{</span><span style="color:#9cdcfe">entry</span><span style="color:#ffd700">}</span><span style="color:#cccccc"> </span><span style="color:#808080">/&gt;</span></div>
<div class="t c" style="left:481.60px;top:443.08px;font-family:'Liberation Mono', monospace;font-size:12.8333px;line-height:19px;"><span style="color:#ffd700">{</span><span style="color:#cccccc">/</span><span style="color:#c586c0">each</span><span style="color:#ffd700">}</span></div>
<div class="t c" style="left:466.20px;top:462.08px;font-family:'Liberation Mono', monospace;font-size:12.8333px;line-height:19px;"><span style="color:#808080">&lt;/</span><span style="color:#569cd6">div</span><span style="color:#808080">&gt;</span></div>
<div class="t c" style="left:466.20px;top:500.08px;font-family:'Liberation Mono', monospace;font-size:12.8333px;line-height:19px;"><span style="color:#808080">&lt;</span><span style="color:#569cd6">div</span><span style="color:#cccccc"> </span><span style="color:#9cdcfe">class</span><span style="color:#cccccc">=</span><span style="color:#ce9178">&quot;bg-white rounded-lg shadow-md p-6&quot;</span><span style="color:#808080">&gt;</span></div>
<div class="t c" style="left:481.60px;top:519.08px;font-family:'Liberation Mono', monospace;font-size:12.8333px;line-height:19px;"><span style="color:#808080">&lt;</span><span style="color:#569cd6">h2</span><span style="color:#cccccc"> </span><span style="color:#9cdcfe">class</span><span style="color:#cccccc">=</span><span style="color:#ce9178">&quot;text-2xl font-semibold mb-4&quot;</span><span style="color:#808080">&gt;</span><span style="color:#cccccc">Recommended Communities</span><span style="color:#808080">&lt;/</span><span style="color:#569cd6">h2</span><span style="color:#808080">&gt;</span></div>
<div class="t c" style="left:481.60px;top:538.08px;font-family:'Liberation Mono', monospace;font-size:12.8333px;line-height:19px;"><span style="color:#808080">&lt;</span><span style="color:#4ec9b0">CommunityList</span><span style="color:#cccccc"> </span><span style="color:#9cdcfe">communities</span><span style="color:#cccccc">=</span><span style="color:#ffd700">{</span><span style="color:#9cdcfe">data</span><span style="color:#cccccc">.</span><span style="color:#9cdcfe">recommendedCommunities</span><span style="color:#ffd700">}</span><span style="color:#cccccc"> </span><span style="color:#808080">/&gt;</span></div>
<div class="t c" style="left:466.20px;top:557.08px;font-family:'Liberation Mono', monospace;font-size:12.8333px;line-height:19px;"><span style="color:#808080">&lt;/</span><span style="color:#569cd6">div</span><span style="color:#808080">&gt;</span></div>
<div class="t c" style="left:466.20px;top:595.08px;font-family:'Liberation Mono', monospace;font-size:12.8333px;line-height:19px;"><span style="color:#808080">&lt;</span><span style="color:#569cd6">div</span><span style="color:#cccccc"> </span><span style="color:#9cdcfe">class</span><span style="color:#cccccc">=</span><span style="color:#ce9178">&quot;bg-white rounded-lg shadow-md p-6&quot;</span><span style="color:#808080">&gt;</span></div>
<div class="t c" style="left:481.60px;top:614.08px;font-family:'Liberation Mono', monospace;font-size:12.8333px;line-height:19px;"><span style="color:#808080">&lt;</span><span style="color:#569cd6">h2</span><span style="color:#cccccc"> </span><span style="color:#9cdcfe">class</span><span style="color:#cccccc">=</span><span style="color:#ce9178">&quot;text-2xl font-semibold mb-4&quot;</span><span style="color:#808080">&gt;</span><span style="color:#cccccc">Recent Forum Posts</span><span style="color:#808080">&lt;/</span><span style="color:#569cd6">h2</span><span style="color:#808080">&gt;</span></div>
<svg class="r" style="left:566px;top:325px;" width="62" height="4" viewBox="0 0 62 4"><path d="M0 1.5  C0.93 0.6 1.87 0.6 2.80 1.5 C3.73 2.4 4.67 2.4 5.60 1.5 C6.53 0.6 7.47 0.6 8.40 1.5 C9.33 2.4 10.27 2.4 11.20 1.5 C12.13 0.6 13.07 0.6 14.00 1.5 C14.93 2.4 15.87 2.4 16.80 1.5 C17.73 0.6 18.67 0.6 19.60 1.5 C20.53 2.4 21.47 2.4 22.40 1.5 C23.33 0.6 24.27 0.6 25.20 1.5 C26.13 2.4 27.07 2.4 28.00 1.5 C28.93 0.6 29.87 0.6 30.80 1.5 C31.73 2.4 32.67 2.4 33.60 1.5 C34.53 0.6 35.47 0.6 36.40 1.5 C37.33 2.4 38.27 2.4 39.20 1.5 C40.13 0.6 41.07 0.6 42.00 1.5 C42.93 2.4 43.87 2.4 44.80 1.5 C45.73 0.6 46.67 0.6 47.60 1.5 C48.53 2.4 49.47 2.4 50.40 1.5 C51.33 0.6 52.27 0.6 53.20 1.5 C54.13 2.4 55.07 2.4 56.00 1.5 C56.93 0.6 57.87 0.6 58.80 1.5 C59.73 2.4 60.67 2.4 61.60 1.5" stroke="#f14c4c" stroke-width="1.1" fill="none"/></svg>
<svg class="r" style="left:597px;top:553px;" width="85" height="4" viewBox="0 0 85 4"><path d="M0 1.5  C0.93 0.6 1.87 0.6 2.80 1.5 C3.73 2.4 4.67 2.4 5.60 1.5 C6.53 0.6 7.47 0.6 8.40 1.5 C9.33 2.4 10.27 2.4 11.20 1.5 C12.13 0.6 13.07 0.6 14.00 1.5 C14.93 2.4 15.87 2.4 16.80 1.5 C17.73 0.6 18.67 0.6 19.60 1.5 C20.53 2.4 21.47 2.4 22.40 1.5 C23.33 0.6 24.27 0.6 25.20 1.5 C26.13 2.4 27.07 2.4 28.00 1.5 C28.93 0.6 29.87 0.6 30.80 1.5 C31.73 2.4 32.67 2.4 33.60 1.5 C34.53 0.6 35.47 0.6 36.40 1.5 C37.33 2.4 38.27 2.4 39.20 1.5 C40.13 0.6 41.07 0.6 42.00 1.5 C42.93 2.4 43.87 2.4 44.80 1.5 C45.73 0.6 46.67 0.6 47.60 1.5 C48.53 2.4 49.47 2.4 50.40 1.5 C51.33 0.6 52.27 0.6 53.20 1.5 C54.13 2.4 55.07 2.4 56.00 1.5 C56.93 0.6 57.87 0.6 58.80 1.5 C59.73 2.4 60.67 2.4 61.60 1.5 C62.53 0.6 63.47 0.6 64.40 1.5 C65.33 2.4 66.27 2.4 67.20 1.5 C68.13 0.6 69.07 0.6 70.00 1.5 C70.93 2.4 71.87 2.4 72.80 1.5 C73.73 0.6 74.67 0.6 75.60 1.5 C76.53 2.4 77.47 2.4 78.40 1.5 C79.33 0.6 80.27 0.6 81.20 1.5 C82.13 2.4 83.07 2.4 84.00 1.5 C84.93 0.6 85.87 0.6 86.80 1.5 C87.73 2.4 88.67 2.4 89.60 1.5" stroke="#f14c4c" stroke-width="1.1" fill="none"/></svg>
<div class="r" style="left:352px;top:89px;width:786px;height:38px;background:#1f1f1f;"></div>
<div class="r" style="left:354px;top:127px;width:784px;height:3px;background:linear-gradient(rgba(0,0,0,0.95),rgba(0,0,0,0.35) 60%,rgba(0,0,0,0));"></div>
<div class="t" style="left:379.10px;top:91.08px;font-family:'Liberation Mono', monospace;font-size:12.8333px;line-height:19px;color:#6e7681">10</div>
<div class="t c" style="left:435.40px;top:90.08px;font-family:'Liberation Mono', monospace;font-size:12.8333px;line-height:19px;"><span style="color:#808080">&lt;/</span><span style="color:#569cd6">script</span><span style="color:#808080">&gt;</span></div>
<div class="t" style="left:379.10px;top:110.08px;font-family:'Liberation Mono', monospace;font-size:12.8333px;line-height:19px;color:#6e7681">12</div>
<div class="t c" style="left:435.40px;top:109.08px;font-family:'Liberation Mono', monospace;font-size:12.8333px;line-height:19px;"><span style="color:#808080">&lt;</span><span style="color:#c586c0">svelte</span><span style="color:#cccccc">:</span><span style="color:#569cd6">head</span><span style="color:#808080">&gt;</span></div>
<div class="r" style="left:1132px;top:89px;width:6px;height:542px;background:linear-gradient(to right, rgba(0,0,0,0), rgba(0,0,0,0.32));"></div>
</body></html>
